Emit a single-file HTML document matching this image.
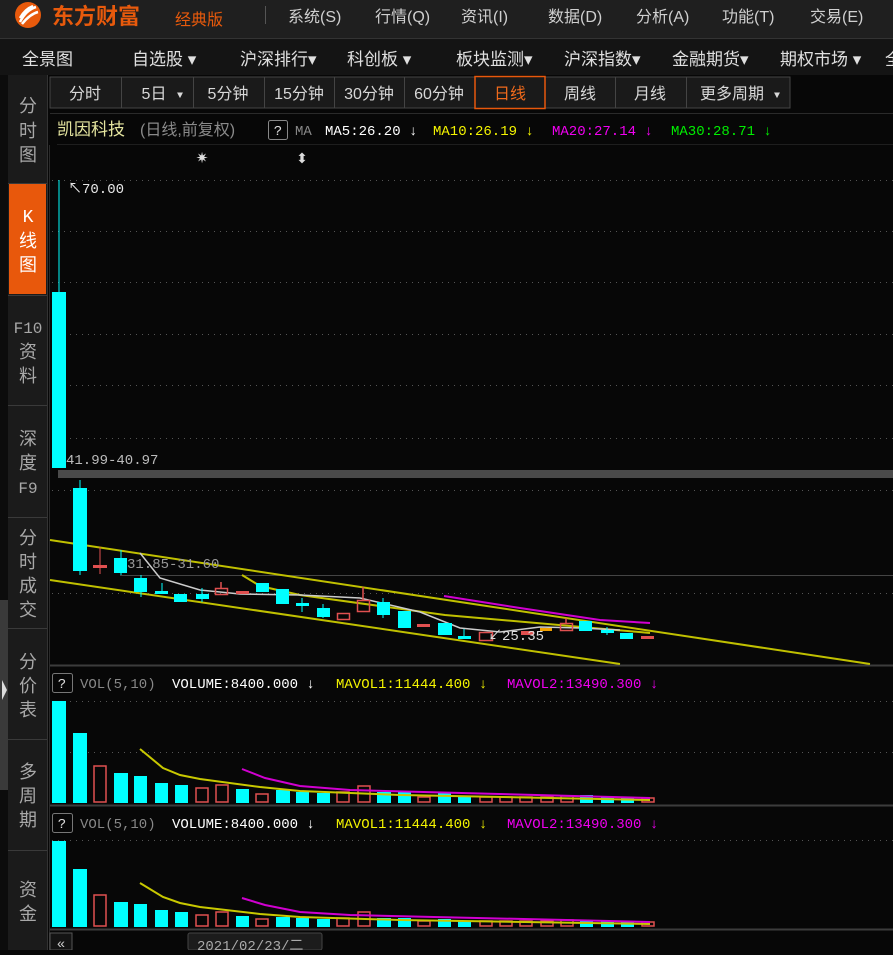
<!DOCTYPE html>
<html><head><meta charset="utf-8"><style>
body{margin:0;width:893px;height:950px;overflow:hidden;background:#070707;font-family:"Liberation Sans","Noto Sans CJK SC",sans-serif}
svg text{font-family:"Liberation Mono","Noto Sans CJK SC",monospace}
.cn{font-family:"Liberation Sans","Noto Sans CJK SC",sans-serif}
</style></head><body>
<svg width="893" height="950" xmlns="http://www.w3.org/2000/svg">
<rect x="0" y="0" width="893" height="38" fill="#1f1f1f"/>
<rect x="0" y="38" width="893" height="37" fill="#141414"/>
<line x1="0" y1="38.5" x2="893" y2="38.5" stroke="#333"/>
<circle cx="28" cy="15" r="13" fill="#e85a0c"/>
<path d="M20 22 Q26 10 36 7 M20 18 Q25 9 33 6 M22 24 Q30 14 38 12" stroke="#fff" stroke-width="2.5" fill="none"/>
<text x="52" y="24" class="cn" font-size="22" font-weight="bold" fill="#e85a0c">东方财富</text>
<text x="175" y="25" class="cn" font-size="16" fill="#e85a0c">经典版</text>
<line x1="265.5" y1="6" x2="265.5" y2="24" stroke="#555"/>
<g class="cn" font-size="16" fill="#cfcfcf">
<text x="288" y="22" class="cn">系统(S)</text><text x="375" y="22" class="cn">行情(Q)</text><text x="461" y="22" class="cn">资讯(I)</text><text x="548" y="22" class="cn">数据(D)</text><text x="636" y="22" class="cn">分析(A)</text><text x="722" y="22" class="cn">功能(T)</text><text x="810" y="22" class="cn">交易(E)</text>
</g>
<g font-size="17" fill="#e0e0e0">
<text x="22" y="65" class="cn">全景图</text><text x="132" y="65" class="cn">自选股 ▾</text><text x="240" y="65" class="cn">沪深排行▾</text><text x="347" y="65" class="cn">科创板 ▾</text><text x="456" y="65" class="cn">板块监测▾</text><text x="564" y="65" class="cn">沪深指数▾</text><text x="672" y="65" class="cn">金融期货▾</text><text x="780" y="65" class="cn">期权市场 ▾</text><text x="885" y="65" class="cn">全</text>
</g>
<rect x="0" y="75" width="8" height="875" fill="#0c0c0c"/>
<rect x="0" y="600" width="8" height="190" fill="#3a3a3a"/>
<path d="M2 680 L7 690 L2 700 Z" fill="#ddd"/>
<rect x="8" y="75" width="39" height="875" fill="#1b1b1b"/>
<line x1="47.5" y1="75" x2="47.5" y2="950" stroke="#333"/>
<rect x="9" y="184" width="37" height="110" fill="#e8580c"/>
<g stroke="#3a3a3a"><line x1="8" y1="183.5" x2="47" y2="183.5"/><line x1="8" y1="295.5" x2="47" y2="295.5"/><line x1="8" y1="405.5" x2="47" y2="405.5"/><line x1="8" y1="517.5" x2="47" y2="517.5"/><line x1="8" y1="628.5" x2="47" y2="628.5"/><line x1="8" y1="739.5" x2="47" y2="739.5"/><line x1="8" y1="850.5" x2="47" y2="850.5"/></g>
<g font-size="18" fill="#a8a8a8" text-anchor="middle">
<text x="28" y="112" class="cn">分</text><text x="28" y="137" class="cn">时</text><text x="28" y="161" class="cn">图</text>
<text x="28" y="222" fill="#fff">K</text><text x="28" y="247" class="cn" fill="#fff">线</text><text x="28" y="271" class="cn" fill="#fff">图</text>
<text x="28" y="333" font-size="16">F10</text><text x="28" y="358" class="cn">资</text><text x="28" y="382" class="cn">料</text>
<text x="28" y="445" class="cn">深</text><text x="28" y="469" class="cn">度</text><text x="28" y="493" font-size="16">F9</text>
<text x="28" y="544" class="cn">分</text><text x="28" y="568" class="cn">时</text><text x="28" y="592" class="cn">成</text><text x="28" y="616" class="cn">交</text>
<text x="28" y="668" class="cn">分</text><text x="28" y="692" class="cn">价</text><text x="28" y="716" class="cn">表</text>
<text x="28" y="778" class="cn">多</text><text x="28" y="802" class="cn">周</text><text x="28" y="826" class="cn">期</text>
<text x="28" y="896" class="cn">资</text><text x="28" y="920" class="cn">金</text>
</g>
<rect x="50" y="77" width="740" height="31" fill="#1a1a1a" stroke="#444"/>
<g stroke="#444"><line x1="121.5" y1="77" x2="121.5" y2="108"/><line x1="193.5" y1="77" x2="193.5" y2="108"/><line x1="264.5" y1="77" x2="264.5" y2="108"/><line x1="334.5" y1="77" x2="334.5" y2="108"/><line x1="404.5" y1="77" x2="404.5" y2="108"/><line x1="615.5" y1="77" x2="615.5" y2="108"/><line x1="686.5" y1="77" x2="686.5" y2="108"/></g>
<rect x="475" y="76.5" width="70" height="32" fill="#1a1a1a" stroke="#e8580c" stroke-width="1.5"/>
<g font-size="16" fill="#d8d8d8" text-anchor="middle">
<text x="85" y="99" class="cn">分时</text><text x="154" y="99" class="cn">5日</text><text x="180" y="98" font-size="10">▼</text><text x="228" y="99" class="cn">5分钟</text><text x="299" y="99" class="cn">15分钟</text><text x="369" y="99" class="cn">30分钟</text><text x="439" y="99" class="cn">60分钟</text><text x="510" y="99" class="cn" fill="#f06a1c">日线</text><text x="580" y="99" class="cn">周线</text><text x="650" y="99" class="cn">月线</text><text x="732" y="99" class="cn">更多周期</text><text x="777" y="98" font-size="10">▼</text>
</g>
<line x1="50" y1="113.5" x2="893" y2="113.5" stroke="#2a2a2a"/>
<text x="57" y="135" class="cn" font-size="17" fill="#e6e6a0">凯因科技</text>
<text x="140" y="135" class="cn" font-size="16" fill="#8a8a8a">(日线,前复权)</text>
<rect x="268.5" y="120.5" width="19" height="19" rx="2" fill="none" stroke="#888"/>
<text x="278" y="135" font-size="14" fill="#ddd" text-anchor="middle">?</text>
<g font-size="14">
<text x="295" y="135" fill="#888">MA</text>
<text x="325" y="135" fill="#fff">MA5:26.20 ↓</text>
<text x="433" y="135" fill="#f4f400">MA10:26.19 ↓</text>
<text x="552" y="135" fill="#f000f0">MA20:27.14 ↓</text>
<text x="671" y="135" fill="#00ee00">MA30:28.71 ↓</text>
</g>
<text x="202" y="163" font-size="15" fill="#ddd" text-anchor="middle">✷</text>
<text x="302" y="163" font-size="14" fill="#ddd" text-anchor="middle">⬍</text>
<line x1="57" y1="144.5" x2="893" y2="144.5" stroke="#1e1e1e"/>
<g stroke="#555" stroke-dasharray="1,5">
<line x1="52" y1="180.5" x2="893" y2="180.5"/><line x1="52" y1="231.5" x2="893" y2="231.5"/><line x1="52" y1="282.5" x2="893" y2="282.5"/><line x1="52" y1="334.5" x2="893" y2="334.5"/><line x1="52" y1="385.5" x2="893" y2="385.5"/><line x1="52" y1="438.5" x2="893" y2="438.5"/><line x1="52" y1="490.5" x2="893" y2="490.5"/><line x1="52" y1="593.5" x2="893" y2="593.5"/>
<line x1="52" y1="701.5" x2="893" y2="701.5"/><line x1="52" y1="752.5" x2="893" y2="752.5"/><line x1="52" y1="840.5" x2="893" y2="840.5"/>
</g>
<rect x="58" y="470" width="835" height="8" fill="#4a4a4a"/>
<line x1="120" y1="575.5" x2="893" y2="575.5" stroke="#444"/>
<line x1="50" y1="665.5" x2="893" y2="665.5" stroke="#3c3c3c" stroke-width="2"/>
<line x1="50" y1="805.5" x2="893" y2="805.5" stroke="#3c3c3c" stroke-width="2"/>
<line x1="50" y1="929.5" x2="893" y2="929.5" stroke="#3c3c3c" stroke-width="2"/>
<line x1="49.5" y1="145" x2="49.5" y2="950" stroke="#2a2a2a"/>
<g stroke="#c0c000" stroke-width="2" fill="none">
<line x1="50" y1="540" x2="870" y2="664"/>
<line x1="50" y1="580" x2="620" y2="664"/>
<polyline points="242,575 260,586 300,595 445,615 650,633"/>
</g>
<polyline points="444,596 520,608 600,620 650,623" stroke="#d000d0" stroke-width="2" fill="none"/>
<polyline points="140,553 160,578 200,590 240,594 300,595 360,598 420,612 460,628 500,632 540,627 580,628 620,630" stroke="#ccc" stroke-width="1.5" fill="none"/>
<g fill="#00ffff" stroke="#00ffff">
<line x1="59" y1="180" x2="59" y2="292"/><rect x="52.5" y="292.5" width="13" height="175"/>
<line x1="80" y1="480" x2="80" y2="575"/><rect x="73.5" y="488.5" width="13" height="82"/>
<line x1="121" y1="550" x2="121" y2="575"/><rect x="114.5" y="558.5" width="12" height="14"/>
<line x1="141" y1="575" x2="141" y2="597"/><rect x="134.5" y="578.5" width="12" height="13"/>
<line x1="162" y1="583" x2="162" y2="594"/><rect x="155.5" y="591.5" width="12" height="2"/>
<rect x="174.5" y="594.5" width="12" height="7"/>
<line x1="202" y1="588" x2="202" y2="602"/><rect x="196.5" y="594.5" width="12" height="4"/>
<rect x="256.5" y="583.5" width="12" height="8"/>
<rect x="276.5" y="589.5" width="12" height="14"/>
<line x1="302" y1="598" x2="302" y2="612"/><rect x="296.5" y="603.5" width="12" height="2"/>
<line x1="323" y1="604" x2="323" y2="618"/><rect x="317.5" y="608.5" width="12" height="8"/>
<line x1="383" y1="598" x2="383" y2="618"/><rect x="377.5" y="602.5" width="12" height="12"/>
<rect x="398.5" y="611.5" width="12" height="16"/>
<rect x="438.5" y="623.5" width="13" height="11"/>
<line x1="464" y1="629" x2="464" y2="637"/><rect x="458.5" y="636.5" width="12" height="2"/>
<rect x="579.5" y="621.5" width="12" height="9"/>
<line x1="607" y1="627" x2="607" y2="635"/><rect x="601.5" y="630.5" width="12" height="2"/>
<rect x="620.5" y="633.5" width="12" height="5"/>
</g>
<g fill="#e05050" stroke="#e05050">
<line x1="100" y1="547" x2="100" y2="574"/><rect x="93.5" y="565.5" width="13" height="2"/>
<rect x="236.5" y="591.5" width="12" height="2"/>
<rect x="417.5" y="624.5" width="12" height="2"/>
<rect x="521.5" y="631.5" width="12" height="3"/>
<rect x="641.5" y="636.5" width="12" height="2"/>
</g>
<g fill="none" stroke="#e05050" stroke-width="1.5">
<line x1="221" y1="582" x2="221" y2="588"/><rect x="215.5" y="588.5" width="12" height="6"/>
<rect x="337.5" y="613.5" width="12" height="6"/>
<line x1="363" y1="587" x2="363" y2="600"/><rect x="357.5" y="600.5" width="12" height="11"/>
<rect x="479.5" y="632.5" width="13" height="8"/>
<line x1="566" y1="618" x2="566" y2="623"/><rect x="560.5" y="623.5" width="12" height="7"/>
</g>
<rect x="540" y="628" width="12" height="3" fill="#f0a000"/>
<text x="68" y="193" font-size="14" fill="#e8e8e8">↖70.00</text>
<text x="66" y="464" font-size="14" fill="#bbb">41.99-40.97</text>
<text x="127" y="568" font-size="14" fill="#999">31.85-31.60</text>
<text x="488" y="640" font-size="14" fill="#ddd">↙25.35</text>
<g font-size="14">
<rect x="52.5" y="673.5" width="20" height="19" rx="2" fill="none" stroke="#777"/><text x="62" y="688" fill="#ddd" text-anchor="middle">?</text>
<text x="80" y="688" fill="#888">VOL(5,10)</text><text x="172" y="688" fill="#fff">VOLUME:8400.000 ↓</text><text x="336" y="688" fill="#f4f400">MAVOL1:11444.400 ↓</text><text x="507" y="688" fill="#f000f0">MAVOL2:13490.300 ↓</text>
<rect x="52.5" y="813.5" width="20" height="19" rx="2" fill="none" stroke="#777"/><text x="62" y="828" fill="#ddd" text-anchor="middle">?</text>
<text x="80" y="828" fill="#888">VOL(5,10)</text><text x="172" y="828" fill="#fff">VOLUME:8400.000 ↓</text><text x="336" y="828" fill="#f4f400">MAVOL1:11444.400 ↓</text><text x="507" y="828" fill="#f000f0">MAVOL2:13490.300 ↓</text>
</g>
<g fill="#00ffff">
<rect x="52" y="701" width="14" height="102"/><rect x="73" y="733" width="14" height="70"/><rect x="114" y="773" width="14" height="30"/><rect x="134" y="776" width="13" height="27"/><rect x="155" y="783" width="13" height="20"/><rect x="175" y="785" width="13" height="18"/><rect x="236" y="789" width="13" height="14"/><rect x="276" y="790" width="14" height="13"/><rect x="296" y="792" width="13" height="11"/><rect x="317" y="793" width="13" height="10"/><rect x="377" y="792" width="14" height="11"/><rect x="398" y="792" width="13" height="11"/><rect x="438" y="793" width="13" height="10"/><rect x="458" y="797" width="13" height="6"/><rect x="580" y="795" width="13" height="8"/><rect x="601" y="797" width="13" height="6"/><rect x="621" y="797" width="13" height="6"/>
</g>
<g fill="none" stroke="#e05050" stroke-width="1.5">
<rect x="94" y="766" width="12" height="36"/><rect x="196" y="788" width="12" height="14"/><rect x="216" y="785" width="12" height="17"/><rect x="256" y="794" width="12" height="8"/><rect x="337" y="792" width="12" height="10"/><rect x="358" y="786" width="12" height="16"/><rect x="418" y="797" width="12" height="5"/><rect x="480" y="797" width="12" height="5"/><rect x="500" y="797" width="12" height="5"/><rect x="520" y="797" width="12" height="5"/><rect x="541" y="797" width="12" height="5"/><rect x="561" y="796" width="12" height="6"/><rect x="642" y="798" width="12" height="4"/>
</g>
<polyline points="140,749 163,768 180,775 200,779 260,787 300,791 400,795 650,800" stroke="#c8c800" stroke-width="2" fill="none"/>
<polyline points="242,769 265,778 300,786 350,790 650,798" stroke="#d000d0" stroke-width="2" fill="none"/>
<g fill="#00ffff">
<rect x="52" y="841" width="14" height="86"/><rect x="73" y="869" width="14" height="58"/><rect x="114" y="902" width="14" height="25"/><rect x="134" y="904" width="13" height="23"/><rect x="155" y="910" width="13" height="17"/><rect x="175" y="912" width="13" height="15"/><rect x="236" y="916" width="13" height="11"/><rect x="276" y="917" width="14" height="10"/><rect x="296" y="918" width="13" height="9"/><rect x="317" y="919" width="13" height="8"/><rect x="377" y="918" width="14" height="9"/><rect x="398" y="918" width="13" height="9"/><rect x="438" y="919" width="13" height="8"/><rect x="458" y="921" width="13" height="6"/><rect x="580" y="920" width="13" height="7"/><rect x="601" y="921" width="13" height="6"/><rect x="621" y="921" width="13" height="6"/>
</g>
<g fill="none" stroke="#e05050" stroke-width="1.5">
<rect x="94" y="895" width="12" height="31"/><rect x="196" y="915" width="12" height="11"/><rect x="216" y="912" width="12" height="14"/><rect x="256" y="919" width="12" height="7"/><rect x="337" y="918" width="12" height="8"/><rect x="358" y="912" width="12" height="14"/><rect x="418" y="921" width="12" height="5"/><rect x="480" y="921" width="12" height="5"/><rect x="500" y="921" width="12" height="5"/><rect x="520" y="921" width="12" height="5"/><rect x="541" y="921" width="12" height="5"/><rect x="561" y="920" width="12" height="6"/><rect x="642" y="922" width="12" height="4"/>
</g>
<polyline points="140,883 163,897 180,903 200,907 260,914 300,917 400,920 650,924" stroke="#c8c800" stroke-width="2" fill="none"/>
<polyline points="242,898 265,905 300,912 350,915 650,922" stroke="#d000d0" stroke-width="2" fill="none"/>
<rect x="50" y="933" width="22" height="17" fill="#141414" stroke="#555"/>
<text x="61" y="948" font-size="14" fill="#ccc" text-anchor="middle">«</text>
<rect x="188" y="933" width="134" height="17" rx="2" fill="#1c1c1c" stroke="#444"/>
<text x="197" y="950" font-size="14" fill="#aaa">2021/02/23/<tspan class="cn">二</tspan></text>
</svg>
</body></html>
